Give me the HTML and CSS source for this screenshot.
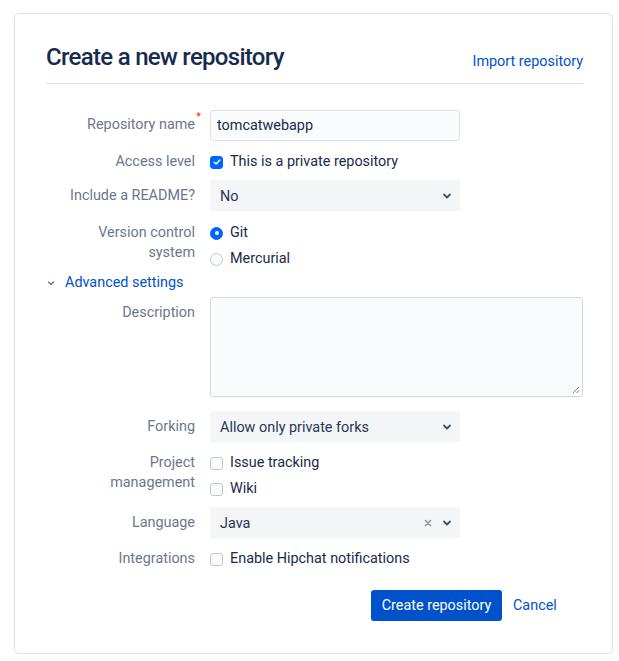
FILE: index.html
```html
<!DOCTYPE html>
<html>
<head>
<meta charset="utf-8">
<link rel="stylesheet" href="styles.css">
</head>
<body>
<div class="card">
  <div class="header">
    <h1 class="title">Create a new repository</h1>
    <a class="link import">Import repository</a>
  </div>
  <div class="form">
    <div class="row r-name">
      <div class="label">Repository name<span class="req">*</span></div>
      <div class="field"><div class="input">tomcatwebapp</div></div>
    </div>
    <div class="row r-access">
      <div class="label">Access level</div>
      <div class="field">
        <div class="opt"><span class="cb checked"><svg viewBox="0 0 12 12" width="12" height="12"><path d="M3.2 6.2 L5.1 8 L8.8 4" fill="none" stroke="#fff" stroke-width="1.5" stroke-linecap="round" stroke-linejoin="round"/></svg></span>This is a private repository</div>
      </div>
    </div>
    <div class="row r-readme">
      <div class="label">Include a README?</div>
      <div class="field"><div class="select short"><span>No</span><span class="icons"><svg class="chev" viewBox="0 0 10 10" width="10" height="10"><path d="M2 3.5 L5 6.5 L8 3.5" fill="none" stroke="#42526e" stroke-width="1.8" stroke-linecap="round" stroke-linejoin="round"/></svg></span></div></div>
    </div>
    <div class="row r-vcs">
      <div class="label">Version control<br>system</div>
      <div class="field options">
        <div class="opt"><span class="radio checked"></span>Git</div>
        <div class="opt"><span class="radio"></span>Mercurial</div>
      </div>
    </div>
    <div class="advanced">
      <svg viewBox="0 0 10 10" width="10" height="10"><path d="M2.5 4 L5 6.5 L7.5 4" fill="none" stroke="#6b778c" stroke-width="1.3" stroke-linecap="round" stroke-linejoin="round"/></svg>
      <a class="link">Advanced settings</a>
    </div>
    <div class="row r-desc">
      <div class="label">Description</div>
      <div class="field"><div class="textarea"><svg class="grip" viewBox="0 0 8 8" width="8" height="8"><path d="M7 1 L1 7 M7 4.5 L4.5 7" stroke="#888" stroke-width="1"/></svg></div></div>
    </div>
    <div class="row r-fork">
      <div class="label">Forking</div>
      <div class="field"><div class="select short"><span>Allow only private forks</span><span class="icons"><svg class="chev" viewBox="0 0 10 10" width="10" height="10"><path d="M2 3.5 L5 6.5 L8 3.5" fill="none" stroke="#42526e" stroke-width="1.8" stroke-linecap="round" stroke-linejoin="round"/></svg></span></div></div>
    </div>
    <div class="row r-project">
      <div class="label">Project<br>management</div>
      <div class="field options">
        <div class="opt"><span class="cb"></span>Issue tracking</div>
        <div class="opt"><span class="cb"></span>Wiki</div>
      </div>
    </div>
    <div class="row r-lang">
      <div class="label">Language</div>
      <div class="field"><div class="select short"><span>Java</span><span class="icons"><svg class="clear" viewBox="0 0 10 10" width="10" height="10"><path d="M2.5 2.5 L7.5 7.5 M7.5 2.5 L2.5 7.5" stroke="#8993a4" stroke-width="1.6" stroke-linecap="round"/></svg><svg class="chev" viewBox="0 0 10 10" width="10" height="10"><path d="M2 3.5 L5 6.5 L8 3.5" fill="none" stroke="#42526e" stroke-width="1.8" stroke-linecap="round" stroke-linejoin="round"/></svg></span></div></div>
    </div>
    <div class="row r-integ">
      <div class="label">Integrations</div>
      <div class="field">
        <div class="opt"><span class="cb"></span>Enable Hipchat notifications</div>
      </div>
    </div>
    <div class="actions">
      <button class="btn-primary">Create repository</button>
      <a class="link cancel">Cancel</a>
    </div>
  </div>
</div>
</body>
</html>
```
FILE: styles.css
```css
* { box-sizing: border-box; }
body {
  margin: 0;
  background: #fff;
  font-family: Roboto, "Liberation Sans", sans-serif;
  font-size: 14.4px;
  color: #172b4d;
}
.card {
  margin: 13px 6px 8px 14px;
  border: 1px solid #dfe1e6;
  border-radius: 5px;
  padding: 27px 29px 31px 31px;
  height: 641px;
}
.header {
  display: flex;
  justify-content: space-between;
  align-items: center;
  border-bottom: 1px solid #dfe1e6;
  padding-bottom: 10px;
}
.title {
  margin: 0;
  font-size: 24px;
  line-height: 32px;
  font-weight: 500;
  letter-spacing: -0.7px;
  color: #172b4d;
}
.link {
  color: #0052cc;
  text-decoration: none;
  font-size: 14.4px;
}
.import { margin-top: 8px; }
.form {
  display: flex;
  flex-direction: column;
  padding-top: 26px;
}
.row {
  display: flex;
  align-items: flex-start;
  gap: 15px;
}
.label {
  width: 149px;
  flex: none;
  text-align: right;
  color: #6b778c;
  line-height: 20px;
  position: relative;
  padding-top: 1px;
}
.req {
  color: #de350b;
  font-size: 11px;
  position: absolute;
  top: -3px;
  right: -6px;
}
.field { flex: 1; }
.input {
  width: 250px;
  height: 31px;
  border: 1px solid #dfe1e6;
  background: #fafbfc;
  border-radius: 3px;
  padding: 0 6px;
  line-height: 30px;
}
.r-name .label { padding-top: 5px; }
.r-access { margin-top: 10px; }
.r-readme { margin-top: 8px; }
.r-readme .label, .r-fork .label, .r-lang .label { padding-top: 6px; }
.r-vcs { margin-top: 11px; }
.options { display: flex; flex-direction: column; gap: 5px; }
.opt {
  display: flex;
  align-items: center;
  line-height: 20px;
  height: 21px;
  padding-top: 1px;
}
.cb {
  width: 13px;
  height: 13px;
  border: 1px solid #c1c7d0;
  background: #fafbfc;
  border-radius: 3px;
  margin-right: 7px;
  display: flex;
  align-items: center;
  justify-content: center;
  flex: none;
}
.cb.checked {
  background: #0065ff;
  border-color: #0065ff;
}
.cb.checked svg { flex: none; }
.radio {
  width: 13px;
  height: 13px;
  border: 1px solid #c1c7d0;
  background: #fafbfc;
  border-radius: 50%;
  margin-right: 7px;
  flex: none;
  display: flex;
  align-items: center;
  justify-content: center;
}
.radio.checked {
  background: #0065ff;
  border-color: #0065ff;
}
.radio.checked::after {
  content: "";
  width: 4px;
  height: 4px;
  border-radius: 50%;
  background: #fff;
}
.select {
  height: 31px;
  background: #f4f5f7;
  border-radius: 3px;
  display: flex;
  align-items: center;
  justify-content: space-between;
  padding: 1px 8px 0 10px;
  color: #253858;
}
.select.short { width: 250px; }
.icons { display: flex; align-items: center; gap: 9px; }
.advanced {
  margin-top: 3px;
  display: flex;
  align-items: center;
  gap: 9px;
  line-height: 20px;
  padding-top: 1px;
}
.r-desc { margin-top: 4px; }
.r-desc .label { padding-top: 6px; }
.textarea {
  width: 373px;
  height: 100px;
  border: 1px solid #d4d8de;
  border-radius: 3px;
  background: #fafbfc;
  position: relative;
}
.grip { position: absolute; right: 2px; bottom: 2px; }
.r-fork { margin-top: 14px; }
.r-project { margin-top: 10px; }
.r-lang { margin-top: 8px; }
.r-integ { margin-top: 10px; }
.actions {
  margin-top: 21px;
  display: flex;
  align-items: center;
  padding-left: 325px;
}
.btn-primary {
  background: #0052cc;
  color: #fff;
  border: none;
  border-radius: 3px;
  height: 31px;
  padding: 0 8px;
  font-family: inherit;
  font-size: 14.4px;
  width: 131px;
}
.cancel { margin-left: 11px; }
```
